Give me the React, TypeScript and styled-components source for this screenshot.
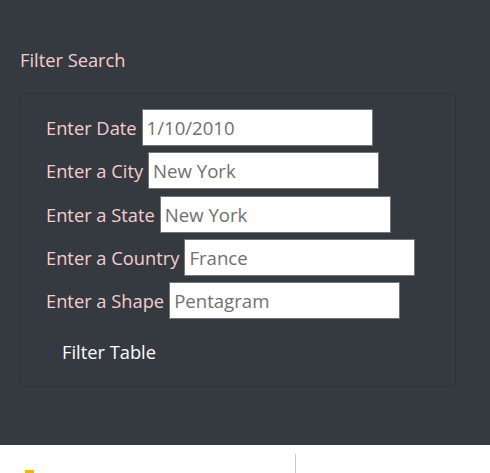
import React from "react";
import styled, { createGlobalStyle } from "styled-components";

const GlobalStyle = createGlobalStyle`
  html, body {
    margin: 0;
    padding: 0;
    background: #ffffff;
  }
  body {
    font-family: "Open Sans", "Noto Sans", sans-serif;
  }
  * { box-sizing: border-box; }
`;

const Page = styled.div`
  width: 490px;
  height: 473px;
  overflow: hidden;
  display: flex;
  flex-direction: column;
`;

const DarkSection = styled.section`
  height: 445px;
  flex: none;
  background: #343a40;
  padding: 47px 34px 0 20px;
`;

const Heading = styled.h2`
  margin: 0 0 21px 0;
  font-size: 18.3px;
  line-height: 25px;
  font-weight: 400;
  color: #f7cdd0;
`;

const Card = styled.div`
  width: 436px;
  height: 294px;
  border: 1px solid rgba(0, 0, 0, 0.125);
  border-radius: 4px;
  padding: 15px 0 0 25px;
`;

const Form = styled.form`
  display: flex;
  flex-direction: column;
  align-items: flex-start;
`;

const Fields = styled.div`
  display: flex;
  flex-direction: column;
  gap: 6.3px;
`;

const FieldRow = styled.div`
  display: flex;
  align-items: center;
  gap: 5px;
  height: 37px;
`;

const Label = styled.label`
  font-size: 18.3px;
  line-height: 25px;
  color: #f7cdd0;
  white-space: nowrap;
`;

const Input = styled.input`
  width: 231px;
  height: 37px;
  border: 1px solid #767676;
  border-radius: 0;
  background: #ffffff;
  padding: 0 4px;
  font-family: "Open Sans", "Noto Sans", sans-serif;
  font-size: 18.6px;
  color: #495057;
  outline: none;
  &::placeholder {
    color: #707070;
    opacity: 1;
  }
`;

const FilterButton = styled.button`
  margin-top: 13.5px;
  padding: 6px 16px;
  background: transparent;
  border: none;
  color: #ffffff;
  font-family: "Open Sans", "Noto Sans", sans-serif;
  font-size: 18.3px;
  line-height: 25px;
  cursor: pointer;
`;

const Footer = styled.footer`
  flex: 1;
  background: #ffffff;
  display: flex;
`;

const FooterLeft = styled.div`
  width: 295px;
  padding: 25px 0 0 25px;
`;

const Accent = styled.div`
  width: 9px;
  height: 10px;
  background: #f4b400;
`;

const Divider = styled.div`
  margin-top: 9px;
  border-left: 1px solid #cccccc;
`;

const fields = [
  { id: "date", label: "Enter Date", placeholder: "1/10/2010" },
  { id: "city", label: "Enter a City", placeholder: "New York" },
  { id: "state", label: "Enter a State", placeholder: "New York" },
  { id: "country", label: "Enter a Country", placeholder: "France" },
  { id: "shape", label: "Enter a Shape", placeholder: "Pentagram" },
];

export default function App() {
  return (
    <>
      <GlobalStyle />
      <Page>
        <DarkSection>
          <Heading>Filter Search</Heading>
          <Card>
            <Form onSubmit={(e) => e.preventDefault()}>
              <Fields>
                {fields.map((f) => (
                  <FieldRow key={f.id}>
                    <Label htmlFor={f.id}>{f.label}</Label>
                    <Input id={f.id} type="text" placeholder={f.placeholder} />
                  </FieldRow>
                ))}
              </Fields>
              <FilterButton type="button">Filter Table</FilterButton>
            </Form>
          </Card>
        </DarkSection>
        <Footer>
          <FooterLeft>
            <Accent />
          </FooterLeft>
          <Divider />
        </Footer>
      </Page>
    </>
  );
}
